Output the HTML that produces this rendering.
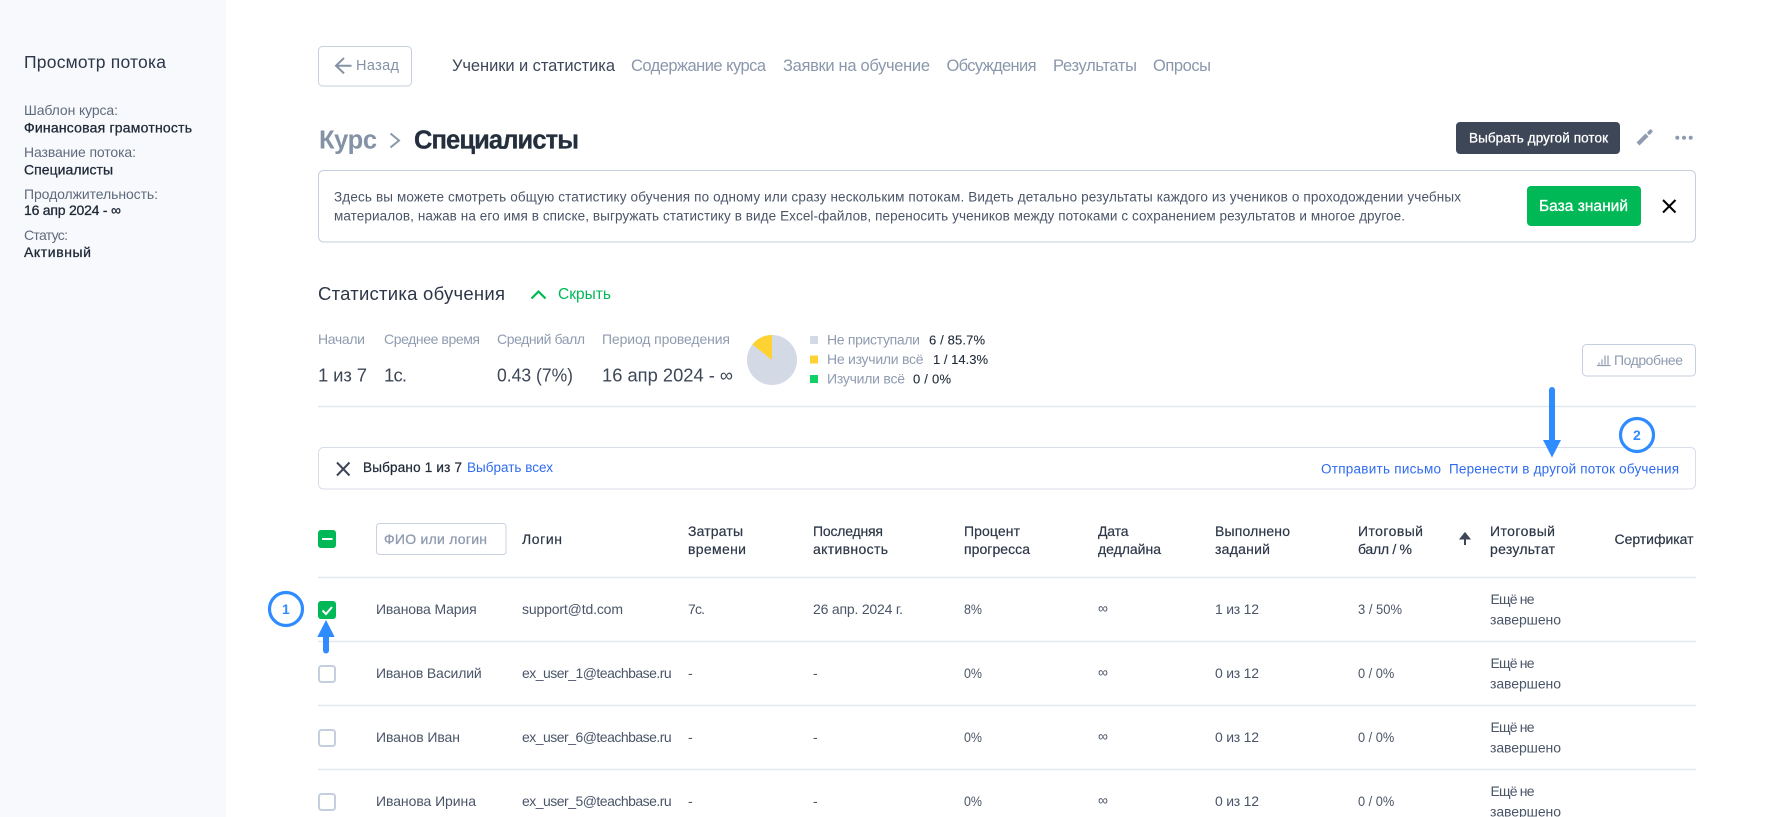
<!DOCTYPE html>
<html lang="ru">
<head>
<meta charset="utf-8">
<title>Просмотр потока</title>
<style>
html,body{margin:0;padding:0;background:#fff;width:1775px;height:817px;overflow:hidden}
svg{display:block}
text{font-family:"Liberation Sans","Noto Sans CJK SC",sans-serif;font-size:14px;fill:#4a5568;white-space:pre}
.h{fill:#2d3748;stroke:#2d3748;stroke-width:.2}
.k{fill:#1f2937;stroke:#1f2937;stroke-width:.3}
.g{fill:#5f6b7d}
.tab{font-size:16.5px;fill:#8a97ab}
.lb{fill:#8f9bb0}
.val{font-size:18.5px;fill:#3d4757}
.b{fill:#2f6bf0}
.line{stroke:#e3e7ee;stroke-width:1.5}
.cb{fill:#fff;stroke:#c5cfdd;stroke-width:2}
.blue{fill:#2f8cff}
</style>
</head>
<body>
<svg width="1775" height="817" viewBox="0 0 1775 817" xmlns="http://www.w3.org/2000/svg">
<rect x="0" y="0" width="226" height="817" fill="#f7f9fc"/>

<!-- Sidebar -->
<text x="24" y="68" textLength="142" style="font-size:17.5px;fill:#2d3748">Просмотр потока</text>
<text x="24" y="115" textLength="94" class="g">Шаблон курса:</text>
<text x="24" y="132.500" textLength="168" class="k">Финансовая грамотность</text>
<text x="24" y="157" textLength="112" class="g">Название потока:</text>
<text x="24" y="174.500" textLength="89" class="k">Специалисты</text>
<text x="24" y="199" textLength="134" class="g">Продолжительность:</text>
<text x="24" y="215" textLength="97" class="k">16 апр 2024 - ∞</text>
<text x="24" y="240" textLength="44" class="g">Статус:</text>
<text x="24" y="257" textLength="67" class="k">Активный</text>

<!-- Top nav -->
<rect x="318.500" y="46.500" width="93" height="39.500" rx="4" fill="#fff" stroke="#c5cfdd"/>
<path d="M351.500 65.700H336M344 58l-8 7.700 8 7.700" fill="none" stroke="#8492a6" stroke-width="2"/>
<text x="356" y="70" textLength="43" style="font-size:14.500px;fill:#8492a6">Назад</text>
<text x="452" y="71" textLength="163" class="tab" style="fill:#3d4757">Ученики и статистика</text>
<text x="631" y="71" textLength="135" class="tab">Содержание курса</text>
<text x="783" y="71" textLength="147" class="tab">Заявки на обучение</text>
<text x="946.500" y="71" textLength="90" class="tab">Обсуждения</text>
<text x="1053" y="71" textLength="84" class="tab">Результаты</text>
<text x="1153" y="71" textLength="58" class="tab">Опросы</text>

<!-- Title -->
<text x="319" y="148.500" textLength="58" style="font-size:25.5px;font-weight:700;fill:#8492a6">Курс</text>
<path d="M390.500 133.500l8.500 7-8.500 7" fill="none" stroke="#8a97ab" stroke-width="2"/>
<text x="414" y="148.500" textLength="165" style="font-size:25.5px;font-weight:700;fill:#242f3e;stroke:#242f3e;stroke-width:.3">Специалисты</text>

<rect x="1456" y="122" width="164" height="32" rx="4" fill="#3d4757"/>
<text x="1469" y="142.500" textLength="139" style="font-size:13.5px;fill:#fff;stroke:#fff;stroke-width:.3">Выбрать другой поток</text>
<path d="M1638 144l9-9" stroke="#8f9bb0" stroke-width="4.200"/>
<path d="M1649.200 132.800l1.500-1.500" stroke="#8f9bb0" stroke-width="3.600" stroke-linecap="round"/>
<circle cx="1677.300" cy="137.700" r="2" fill="#8f9bb0"/>
<circle cx="1684" cy="137.700" r="2" fill="#8f9bb0"/>
<circle cx="1690.700" cy="137.700" r="2" fill="#8f9bb0"/>

<!-- Notice -->
<rect x="318.500" y="170.500" width="1377" height="71.500" rx="5" fill="#fff" stroke="#c5cfdd"/>
<text x="334" y="201.500" textLength="1127" style="font-size:13.5px">Здесь вы можете смотреть общую статистику обучения по одному или сразу нескольким потокам. Видеть детально результаты каждого из учеников о проходождении учебных</text>
<text x="334" y="220.500" textLength="1071" style="font-size:13.5px">материалов, нажав на его имя в списке, выгружать статистику в виде Excel-файлов, переносить учеников между потоками с сохранением результатов и многое другое.</text>
<rect x="1527" y="186" width="114" height="40" rx="4" fill="#00b956"/>
<text x="1539" y="211" textLength="89" style="font-size:15.5px;fill:#fff;stroke:#fff;stroke-width:.3">База знаний</text>
<path d="M1663 200l12.500 12.500M1675.500 200L1663 212.500" stroke="#000" stroke-width="2" fill="none"/>

<!-- Stats -->
<text x="318" y="300" textLength="187" style="font-size:18.5px;fill:#2d3748">Статистика обучения</text>
<path d="M531.500 298.500l7-7 7 7" fill="none" stroke="#00b956" stroke-width="2.200"/>
<text x="558" y="299" textLength="53" style="font-size:15.5px;fill:#00b956">Скрыть</text>

<text x="318" y="344" textLength="47" class="lb">Начали</text>
<text x="384" y="344" textLength="96" class="lb">Среднее время</text>
<text x="497" y="344" textLength="88" class="lb">Средний балл</text>
<text x="602" y="344" textLength="128" class="lb">Период проведения</text>
<text x="318" y="381.500" textLength="49" class="val">1 из 7</text>
<text x="384" y="381.500" textLength="23" class="val">1с.</text>
<text x="497" y="381.500" textLength="76" lengthAdjust="spacingAndGlyphs" class="val">0.43 (7%)</text>
<text x="602" y="381.500" textLength="131" lengthAdjust="spacingAndGlyphs" class="val">16 апр 2024 - ∞</text>

<circle cx="772" cy="360" r="25" fill="#d3dae6"/>
<path d="M772 360V335A25 25 0 0 0 752.400 344.500Z" fill="#ffd233"/>
<rect x="810" y="336" width="8" height="8" fill="#d3dae6"/>
<rect x="810" y="355.500" width="8" height="8" fill="#ffd233"/>
<rect x="810" y="375" width="8" height="8" fill="#0fd164"/>
<text x="827" y="344.500" textLength="93" class="lb">Не приступали</text>
<text x="929" y="344.500" textLength="56" class="k" style="font-size:13px;stroke-width:.1">6 / 85.7%</text>
<text x="827" y="364" textLength="96.500" class="lb">Не изучили всё</text>
<text x="933" y="364" textLength="55" class="k" style="font-size:13px;stroke-width:.1">1 / 14.3%</text>
<text x="827" y="383.500" textLength="78" class="lb">Изучили всё</text>
<text x="913" y="383.500" textLength="38" class="k" style="font-size:13px;stroke-width:.1">0 / 0%</text>

<rect x="1582.500" y="344.500" width="113" height="31.500" rx="4" fill="#fff" stroke="#c5cfdd"/>
<path d="M1597 365.500h13.500M1599 364.500v-2M1602 364.500v-5M1605 364.500v-9M1608 364.500v-9" stroke="#8f9bb0" stroke-width="1.200" fill="none"/>
<text x="1614" y="365" textLength="69" class="lb">Подробнее</text>

<path class="line" d="M318 406.500H1696"/>

<!-- Selection bar -->
<rect x="318.500" y="447.500" width="1377" height="41.500" rx="5" fill="#fff" stroke="#d8dee8"/>
<path d="M337 462.500l12.500 13M349.500 462.500L337 475.500" stroke="#3d4757" stroke-width="2" fill="none"/>
<text x="363" y="472" textLength="99" class="k" style="font-size:13.5px;stroke-width:.25">Выбрано 1 из 7</text>
<text x="467" y="472" textLength="86" class="b" style="font-size:13.5px">Выбрать всех</text>
<text x="1321" y="473.500" textLength="120" class="b" style="font-size:13.5px">Отправить письмо</text>
<text x="1449" y="473.500" textLength="230" class="b" style="font-size:13.5px">Перенести в другой поток обучения</text>

<!-- Table header -->
<rect x="318" y="530" width="18" height="18" rx="3" fill="#00b956"/>
<rect x="322" y="538" width="10.500" height="2" fill="#fff"/>
<rect x="376.500" y="523.500" width="129.500" height="31" rx="3" fill="#fff" stroke="#c9d2df"/>
<text x="384" y="544" textLength="103" style="fill:#8f9bb0;stroke:#8f9bb0;stroke-width:.3">ФИО или логин</text>
<text x="522" y="544" textLength="40" class="h">Логин</text>
<text x="688" y="536" textLength="55" class="h">Затраты</text>
<text x="688" y="554" textLength="58" class="h">времени</text>
<text x="813" y="536" textLength="70" class="h">Последняя</text>
<text x="813" y="554" textLength="75" class="h">активность</text>
<text x="964" y="536" textLength="56" class="h">Процент</text>
<text x="964" y="554" textLength="66" class="h">прогресса</text>
<text x="1098" y="536" textLength="30.500" class="h">Дата</text>
<text x="1098" y="554" textLength="63" class="h">дедлайна</text>
<text x="1215" y="536" textLength="75" class="h">Выполнено</text>
<text x="1215" y="554" textLength="55" class="h">заданий</text>
<text x="1358" y="536" textLength="65" class="h">Итоговый</text>
<text x="1358" y="554" textLength="54" class="h">балл / %</text>
<path d="M1465 545v-9M1461 538.500l4-5 4 5z" stroke="#3d4757" stroke-width="2" fill="#3d4757"/>
<text x="1490" y="536" textLength="65" class="h">Итоговый</text>
<text x="1490" y="554" textLength="65" class="h">результат</text>
<text x="1614.500" y="544" textLength="79" class="h">Сертификат</text>

<path class="line" d="M318 577.500H1696M318 641.500H1696M318 705.500H1696M318 769.500H1696"/>

<!-- Row 1 -->
<rect x="318" y="601" width="18" height="18" rx="3" fill="#00b956"/>
<path d="M322.500 610.500l3.500 3.500 6-7" fill="none" stroke="#fff" stroke-width="2"/>
<text x="376" y="614" textLength="100.700">Иванова Мария</text>
<text x="522" y="614" textLength="101">support@td.com</text>
<text x="688" y="614" textLength="17">7с.</text>
<text x="813" y="614" textLength="90">26 апр. 2024 г.</text>
<text x="964" y="614" textLength="18" lengthAdjust="spacingAndGlyphs">8%</text>
<text x="1098" y="613" textLength="9">∞</text>
<text x="1215" y="614" textLength="44">1 из 12</text>
<text x="1358" y="614" textLength="44" lengthAdjust="spacingAndGlyphs">3 / 50%</text>
<text x="1490.500" y="604" textLength="44">Ещё не</text>
<text x="1490" y="624.500" textLength="71">завершено</text>

<!-- Row 2 -->
<rect class="cb" x="319" y="666" width="16" height="16" rx="2.500"/>
<text x="376" y="678" textLength="105.700">Иванов Василий</text>
<text x="522" y="678" textLength="149.700">ex_user_1@teachbase.ru</text>
<text x="688" y="678" textLength="4">-</text>
<text x="813" y="678" textLength="4">-</text>
<text x="964" y="678" textLength="18" lengthAdjust="spacingAndGlyphs">0%</text>
<text x="1098" y="677" textLength="9">∞</text>
<text x="1215" y="678" textLength="44">0 из 12</text>
<text x="1358" y="678" textLength="36.300" lengthAdjust="spacingAndGlyphs">0 / 0%</text>
<text x="1490.500" y="668" textLength="44">Ещё не</text>
<text x="1490" y="688.500" textLength="71">завершено</text>

<!-- Row 3 -->
<rect class="cb" x="319" y="730" width="16" height="16" rx="2.500"/>
<text x="376" y="742" textLength="84">Иванов Иван</text>
<text x="522" y="742" textLength="149.700">ex_user_6@teachbase.ru</text>
<text x="688" y="742" textLength="4">-</text>
<text x="813" y="742" textLength="4">-</text>
<text x="964" y="742" textLength="18" lengthAdjust="spacingAndGlyphs">0%</text>
<text x="1098" y="741" textLength="9">∞</text>
<text x="1215" y="742" textLength="44">0 из 12</text>
<text x="1358" y="742" textLength="36.300" lengthAdjust="spacingAndGlyphs">0 / 0%</text>
<text x="1490.500" y="732" textLength="44">Ещё не</text>
<text x="1490" y="752.500" textLength="71">завершено</text>

<!-- Row 4 -->
<rect class="cb" x="319" y="794" width="16" height="16" rx="2.500"/>
<text x="376" y="806" textLength="100">Иванова Ирина</text>
<text x="522" y="806" textLength="149.700">ex_user_5@teachbase.ru</text>
<text x="688" y="806" textLength="4">-</text>
<text x="813" y="806" textLength="4">-</text>
<text x="964" y="806" textLength="18" lengthAdjust="spacingAndGlyphs">0%</text>
<text x="1098" y="805" textLength="9">∞</text>
<text x="1215" y="806" textLength="44">0 из 12</text>
<text x="1358" y="806" textLength="36.300" lengthAdjust="spacingAndGlyphs">0 / 0%</text>
<text x="1490.500" y="796" textLength="44">Ещё не</text>
<text x="1490" y="816.500" textLength="71">завершено</text>

<!-- Annotations -->
<circle cx="286" cy="609" r="16.500" fill="#fff" stroke="#2f8cff" stroke-width="3.200"/>
<text x="282" y="614" style="font-size:14px;font-weight:700;fill:#2f8cff">1</text>
<path d="M326 620l8.700 17h-5.700v13.500a3 3 0 0 1-6 0V637h-5.700z" class="blue"/>
<circle cx="1637" cy="435" r="16.500" fill="#fff" stroke="#2f8cff" stroke-width="3.200"/>
<text x="1633" y="440" style="font-size:14px;font-weight:700;fill:#2f8cff">2</text>
<path d="M1552 457.500l-9-17.500h6V390a3 3 0 0 1 6 0v50h6z" class="blue"/>
</svg>
</body>
</html>
